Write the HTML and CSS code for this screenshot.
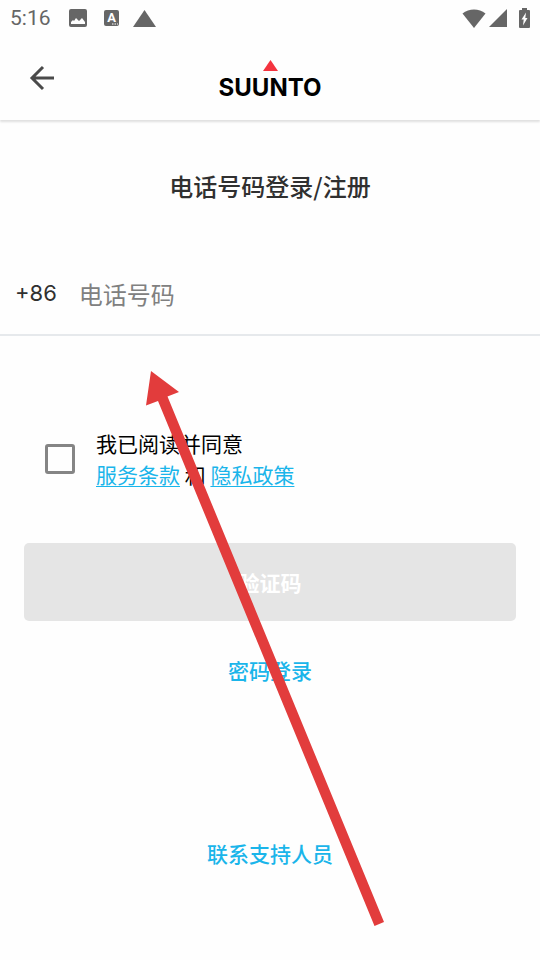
FILE: index.html
```html
<!DOCTYPE html>
<html lang="zh-CN">
<head>
    <meta charset="UTF-8">
    <meta name="viewport" content="width=device-width, initial-scale=1.0">
    <title>电话号码登录/注册</title>
    <link rel="stylesheet" href="styles.css">
</head>
<body>
    <div class="status-bar">
        <span class="time">5:16</span>
        <!-- notifications -->
        <svg class="photo-icon" width="18" height="18" viewBox="0 0 18 18">
            <path fill-rule="evenodd" d="M2 0h14a2 2 0 0 1 2 2v14a2 2 0 0 1-2 2H2a2 2 0 0 1-2-2V2a2 2 0 0 1 2-2zM2 15h14v-2l-3-4-3 3-3-3-2 3-1-1-2 2z"/>
        </svg>
        <svg class="input-icon" width="15" height="16" viewBox="0 0 15 16">
            <rect width="15" height="16" rx="2"/>
            <text x="7.500" y="12" text-anchor="middle">A</text>
            <path d="M8 14h1.500M10.500 14h1.500M13 14h1"/>
        </svg>
        <svg class="alert-icon" width="23" height="17" viewBox="0 0 23 17"><path d="M11.500 0L23 17H0z"/></svg>
        <!-- network and battery -->
        <svg class="wifi-icon" width="24" height="19" viewBox="0 0 24 19"><path d="M12 19L0.500 4.500C7 -1 17 -1 23.500 4.500z"/></svg>
        <svg class="signal-icon" width="18" height="18" viewBox="0 0 18 18"><path d="M18 0v18H0z"/></svg>
        <svg class="battery-icon" width="11" height="20" viewBox="0 0 11 20">
            <path fill-rule="evenodd" d="M3 0h5v2h2a1 1 0 0 1 1 1v16a1 1 0 0 1-1 1H1a1 1 0 0 1-1-1V3a1 1 0 0 1 1-1h2zM7 4.500L2.500 11.500h2.200L4 17.500l4.500-7.500H6.300z"/>
        </svg>
    </div>

    <header class="header">
        <button class="back" type="button" aria-label="返回">
            <svg width="26" height="26" viewBox="0 0 26 26"><path d="M25 13H3M14 2L3 13L14 24"/></svg>
        </button>
        <div class="logo">
            <svg width="15" height="11" viewBox="0 0 15 11"><path d="M7.500 0L15 11H0z"/></svg>
            <span>SUUNTO</span>
        </div>
    </header>

    <main class="login">
        <h1>电话号码登录/注册</h1>

        <form>
            <div class="phone">
                <button class="country-code" type="button">+86</button>
                <input class="phone-input" type="tel" placeholder="电话号码" aria-label="电话号码">
            </div>

            <div class="terms">
                <input class="checkbox" type="checkbox" id="agree">
                <div class="terms-text">
                    <label for="agree">我已阅读并同意</label>
                    <div><a href="#terms">服务条款</a> 和 <a href="#privacy">隐私政策</a></div>
                </div>
            </div>

            <button class="submit" type="submit" disabled>验证码</button>
        </form>

        <a class="link" href="#password">密码登录</a>
        <a class="link support" href="#support">联系支持人员</a>
    </main>

    <!-- arrow pointing at the phone field -->
    <svg class="arrow" width="234" height="556" viewBox="0 0 234 556">
        <path d="M5 0L33 21L21.500 25.500L238 551L228.500 555L12 30L0 34.500z"/>
    </svg>
</body>
</html>
```
FILE: styles.css
```css
body {
    position: relative;
    margin: 0;
    background-color: #fefefe;
    color: #000;
    font-family: "Noto Sans CJK SC", sans-serif;
    font-size: 21px;
}
svg {
    display: block;
    flex: none;
}
button, input {
    margin: 0;
    padding: 0;
    border: none;
    background: none;
    font-family: inherit;
}
a {
    color: #1ab5ea;
}

/* status bar */
.status-bar {
    display: flex;
    align-items: center;
    height: 36px;
    padding: 0 10px;
    fill: #666;
}
.time {
    width: 59px;
    color: #666;
    font-family: Roboto, sans-serif;
    font-size: 21px;
}
.input-icon {
    margin-left: 17px;
    stroke: #fff;
}
.input-icon rect {
    stroke: none;
}
.input-icon text {
    fill: #fff;
    stroke: none;
    font-family: Roboto, sans-serif;
    font-size: 13px;
    font-weight: 700;
}
.alert-icon {
    margin-left: 14px;
}
.wifi-icon {
    margin-left: auto;
}
.signal-icon {
    margin: 0 12px 0 3px;
}

/* header */
.header {
    display: grid;
    grid-template-columns: 84px 1fr 84px;
    align-items: center;
    height: 84px;
    background-color: #fefefe;
    box-shadow: 0 2px 2px rgba(0, 0, 0, 0.12);
}
.back {
    justify-self: center;
    cursor: pointer;
}
.back svg {
    fill: none;
    stroke: #4a4a4a;
    stroke-width: 3;
}
.logo {
    display: flex;
    flex-direction: column;
    align-items: center;
    gap: 4px;
    padding-top: 4px;
    fill: #f4333f;
    font-family: Inter, sans-serif;
    font-size: 24px;
    font-weight: 700;
    line-height: 26px;
}

/* login form */
.login {
    display: flex;
    flex-direction: column;
    align-items: center;
}
form {
    width: 100%;
}
h1 {
    margin: 48px 0;
    color: #303030;
    font-size: 24px;
    font-weight: 500;
    line-height: 36px;
}
.phone {
    display: flex;
    align-items: center;
    gap: 22px;
    height: 82px;
    padding: 0 15px;
    border-bottom: 2px solid #e6e9ec;
}
.country-code {
    color: #303030;
    font-family: Inter, sans-serif;
    font-size: 22px;
}
.phone-input {
    flex: 1;
    min-width: 0;
    padding-top: 2px;
    color: #303030;
    font-size: 24px;
    line-height: 36px;
    outline: none;
}
.phone-input::placeholder {
    color: #808080;
    opacity: 1;
}
.terms {
    display: flex;
    align-items: center;
    gap: 21px;
    margin: 92px 24px 53px 45px;
    line-height: 31px;
}
.checkbox {
    appearance: none;
    flex: none;
    width: 30px;
    height: 30px;
    border: 3px solid #858585;
    border-radius: 3px;
}
.checkbox:checked {
    background-color: #1ab5ea;
}
.terms-text a {
    text-decoration-thickness: 1px;
    text-underline-offset: 3px;
}
.submit {
    display: block;
    width: calc(100% - 48px);
    height: 78px;
    margin: 0 24px;
    border-radius: 5px;
    background-color: #e5e5e5;
    color: #fff;
    font-size: 21px;
    font-weight: 700;
}
.link {
    margin-top: 34px;
    font-weight: 500;
    line-height: 31px;
    text-decoration: none;
}
.support {
    margin: 152px 0 91px;
}

/* red arrow over the page */
.arrow {
    position: absolute;
    top: 371px;
    left: 146px;
    overflow: visible;
    fill: #e23c3c;
    pointer-events: none;
}
```
